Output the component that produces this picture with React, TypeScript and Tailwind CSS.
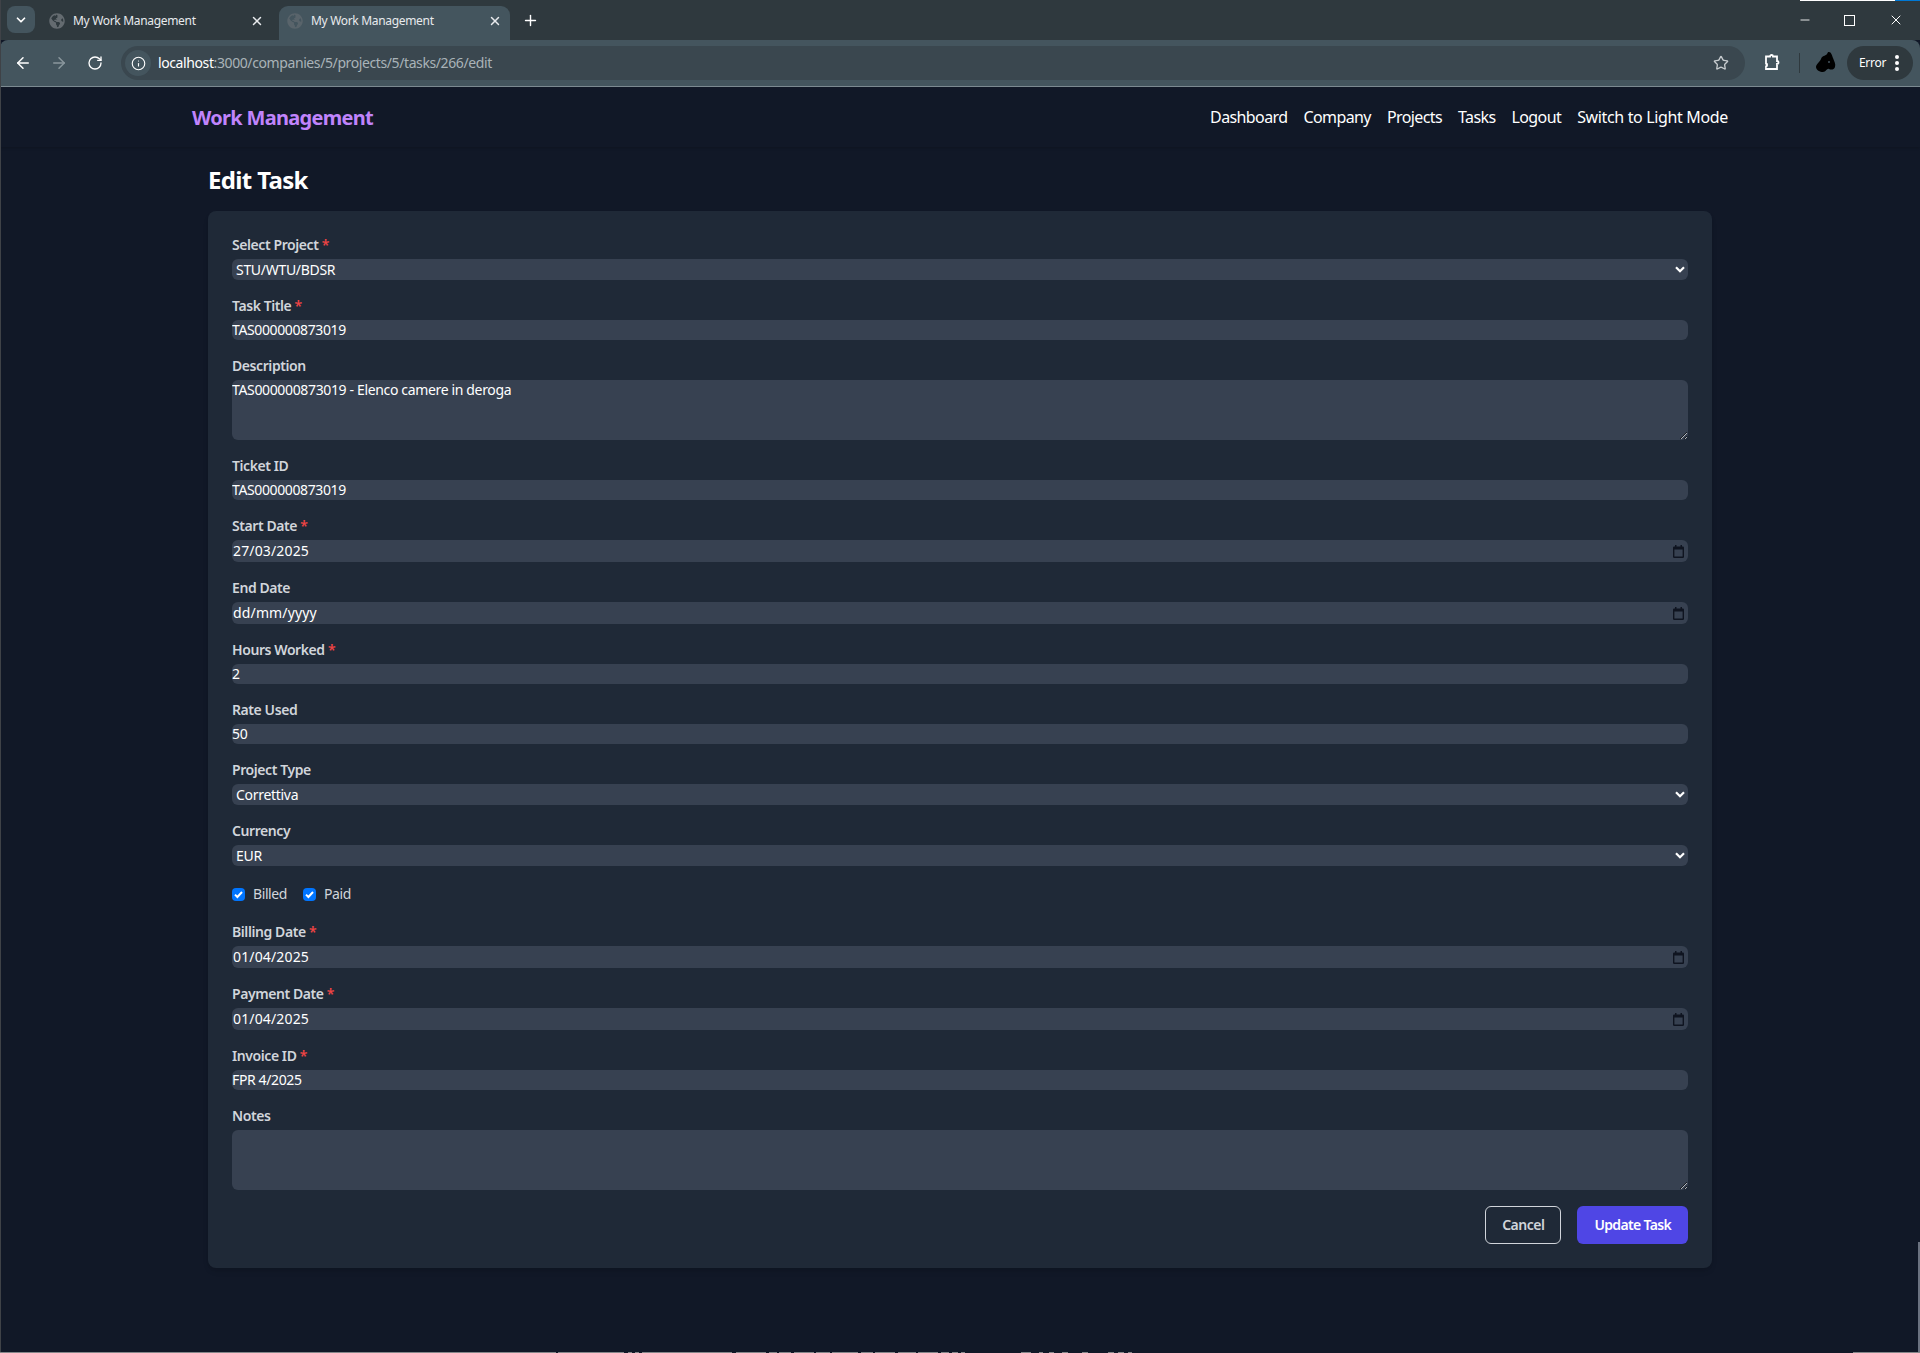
import { ArrowLeft, ArrowRight, ChevronDown, Info, Minus, Plus, RotateCw, Star, X } from 'lucide-react';
import { FaGlobeAmericas } from 'react-icons/fa';

const font = 'font-["Noto_Sans","Open_Sans",sans-serif]';
const labelClass = 'block text-sm leading-5 font-semibold text-[#d1d5db] tracking-[-0.42px]';
const inputClass = 'mt-1 block w-full bg-[#374151] rounded-md text-sm text-white outline-none';

// stray desktop pixels along the bottom edge of the capture: [gap before, width]
const bottomBits = [
  [0, 556], [2, 66], [4, 4], [3, 4], [3, 90], [4, 30], [3, 8], [2, 12], [3, 20], [2, 14], [2, 26], [3, 12], [2, 20], [3, 18], [2, 20], [3, 8], [3, 6], [3, 4],
  [56, 10], [8, 4], [6, 5], [8, 6], [14, 6], [20, 6], [4, 6], [4, 4],
];

const Label = ({ text, required }: { text: string; required?: boolean }) => (
  <label className={labelClass}>
    {text}
    {required && <span className="text-[#ef4444]"> *</span>}
  </label>
);

const TextField = ({ label, value, required }: { label: string; value: string; required?: boolean }) => (
  <div>
    <Label text={label} required={required} />
    <input readOnly value={value} className={`${inputClass} h-5 leading-5 tracking-[-0.38px]`} />
  </div>
);

const TextAreaField = ({ label, value }: { label: string; value: string }) => (
  <div>
    <Label text={label} />
    <textarea readOnly value={value} className={`${inputClass} h-[60px] leading-5 tracking-[-0.35px] [color-scheme:dark]`} />
  </div>
);

const SelectField = ({ label, value, required }: { label: string; value: string; required?: boolean }) => (
  <div>
    <Label text={label} required={required} />
    <div className={`${inputClass} h-[21px] leading-[21px] pl-1 pr-[3px] flex items-center justify-between tracking-[-0.3px]`}>
      <span>{value}</span>
      <svg width="10" height="7" viewBox="0 0 10 7">
        <path d="M1 1.200 5 5.200 9 1.200" fill="none" stroke="white" strokeWidth="2.200" />
      </svg>
    </div>
  </div>
);

const DateField = ({ label, value, required }: { label: string; value: string; required?: boolean }) => (
  <div>
    <Label text={label} required={required} />
    <div className={`${inputClass} h-[22px] leading-[22px] pl-px pr-1 flex items-center justify-between tracking-[0.15px]`}>
      <span>{value}</span>
      <svg width="11" height="13" viewBox="0 0 11 13" className="text-[#0f1420]">
        <path fill="currentColor" d="M2 0h1.500v1.500h4V0H9v1.500h.8A1.200 1.200 0 0 1 11 2.700v9.100a1.200 1.200 0 0 1-1.200 1.200H1.200A1.200 1.200 0 0 1 0 11.800V2.700a1.200 1.200 0 0 1 1.200-1.200H2V0Zm-.6 4.500v7.100h8.200V4.500H1.400Z" />
      </svg>
    </div>
  </div>
);

const Check = ({ label }: { label: string }) => (
  <label className="flex items-center gap-2 text-sm leading-6 text-[#d1d5db] tracking-[-0.4px]">
    <span className="w-[13px] h-[13px] rounded-sm bg-[#0075ff] flex items-center justify-center">
      <svg width="11" height="11" viewBox="0 0 11 11">
        <path d="M2 5.600 4.400 8 9 3" fill="none" stroke="white" strokeWidth="2" />
      </svg>
    </span>
    {label}
  </label>
);

const Tab = ({ active }: { active?: boolean }) => (
  <div className={`w-[231px] shrink-0 h-[34px] flex items-center pl-2 pr-2 pb-1 rounded-t-[9px] ${active ? 'bg-[#44555e]' : ''}`}>
    <FaGlobeAmericas size={16} className={`shrink-0 ${active ? 'text-[#59646b]' : 'text-[#646b70]'}`} />
    <span className="ml-2 text-xs text-[#e8eaed] flex-1 whitespace-nowrap tracking-[-0.32px]">My Work Management</span>
    <X size={14} strokeWidth={2.500} className="text-[#e8eaed]" />
  </div>
);

const Chrome = () => (
  <div className="shrink-0 relative">
    <div className="absolute top-0 right-0 h-px w-[120px] flex">
      <div className="w-[95px] bg-white" />
      <div className="flex-1 bg-[#0078d4]" />
    </div>
    <div className="h-10 bg-[#2f393e] flex items-start pl-[7px] pt-[6px]">
      <div className="w-7 h-[27px] rounded-lg bg-[#44555e] flex items-center justify-center mr-[6px]">
        <ChevronDown size={14} strokeWidth={3} className="text-white" />
      </div>
      <Tab />
      <div className="w-[7px]" />
      <Tab active />
      <Plus size={17} strokeWidth={2} className="text-white mt-[6px] ml-[12px]" />
      <div className="ml-auto flex items-center text-white -mt-[6px] h-10">
        <Minus size={14} strokeWidth={1.500} className="mr-[32px]" />
        <span className="w-[11px] h-[11px] border border-white mr-[33px]" />
        <X size={16} strokeWidth={1.500} className="mr-4" />
      </div>
    </div>
    <div className="h-[47px] bg-[#44555e] rounded-t-lg border-b border-[#7c8a91] flex items-center pl-[14px] pr-[7px] text-white">
      <ArrowLeft size={18} strokeWidth={2} />
      <ArrowRight size={18} strokeWidth={2} className="ml-[18px] text-[#8a979d]" />
      <RotateCw size={16} strokeWidth={2} className="ml-[19px]" />
      <div className="ml-[18px] w-[1624px] shrink-0 h-[34px] rounded-full bg-[#3a474f] flex items-center pl-1 pr-4">
        <span className="w-[26px] h-[26px] rounded-full bg-[#44555e] flex items-center justify-center">
          <Info size={15} strokeWidth={1.800} />
        </span>
        <span className="ml-[7px] text-sm tracking-[-0.4px] text-white">localhost<span className="text-[#a9b3b8]">:3000/companies/5/projects/5/tasks/266/edit</span></span>
        <Star size={16} strokeWidth={2} className="ml-auto text-[#c6cbce]" />
      </div>
      <svg width="18" height="18" viewBox="0 0 18 18" className="ml-[18px]">
        <path fill="none" stroke="white" strokeWidth="1.800" d="M3 2.500h4c0-2 3-2 3 0h4v4.500c2 0 2 3 0 3V15H3v-2.500c1.500 0 1.500-3 0-3V2.500Z" />
      </svg>
      <div className="w-px h-[20px] bg-[#2f393e] ml-[18px]" />
      <svg width="20" height="24" viewBox="0 0 20 24" className="ml-4">
        <path fill="#000" d="M13 1c2 0 3 3 4 6s3 6 2 9-4 3-6 2-3 3-6 3-7-2-7-5 4-5 5-8 3-3 5-4 1-3 3-3Z" />
        <circle cx="13" cy="11" r="1" fill="#44555e" />
      </svg>
      <div className="ml-auto w-[66px] h-[34px] rounded-full bg-[#2f393e] flex items-center pl-3 text-xs tracking-[-0.3px]">
        Error
        <span className="ml-[9px] flex flex-col gap-[2.500px]">
          <span className="w-[3.500px] h-[3.500px] rounded-full bg-white" />
          <span className="w-[3.500px] h-[3.500px] rounded-full bg-white" />
          <span className="w-[3.500px] h-[3.500px] rounded-full bg-white" />
        </span>
      </div>
    </div>
  </div>
);

export default function App() {
  return (
    <div className={`relative h-[1353px] overflow-hidden flex flex-col bg-[#111827] ${font}`}>
      <Chrome />
      <main className="flex-1 bg-[#111827]">
        <nav className="h-[60px] shadow-sm">
          <div className="max-w-[1536px] mx-auto h-full flex items-center justify-between">
            <span className="text-xl font-bold text-[#c084fc] tracking-[-0.7px] pt-px">Work Management</span>
            <div className="flex gap-4 text-white tracking-[-0.6px]">
              <a>Dashboard</a>
              <a>Company</a>
              <a>Projects</a>
              <a>Tasks</a>
              <a>Logout</a>
              <a className="tracking-[-0.35px]">Switch to Light Mode</a>
            </div>
          </div>
        </nav>
        <div className="max-w-[1536px] mx-auto px-4">
          <h1 className="text-2xl font-bold text-white mt-[17px] mb-[15px] leading-8 tracking-[-0.65px]">Edit Task</h1>
          <form className="bg-[#1f2937] rounded-lg p-6 flex flex-col gap-4 shadow-md">
            <SelectField label="Select Project" value="STU/WTU/BDSR" required />
            <TextField label="Task Title" value="TAS000000873019" required />
            <TextAreaField label="Description" value="TAS000000873019 - Elenco camere in deroga" />
            <TextField label="Ticket ID" value="TAS000000873019" />
            <DateField label="Start Date" value="27/03/2025" required />
            <DateField label="End Date" value="dd/mm/yyyy" />
            <TextField label="Hours Worked" value="2" required />
            <TextField label="Rate Used" value="50" />
            <SelectField label="Project Type" value="Correttiva" />
            <SelectField label="Currency" value="EUR" />
            <div className="flex gap-4">
              <Check label="Billed" />
              <Check label="Paid" />
            </div>
            <DateField label="Billing Date" value="01/04/2025" required />
            <DateField label="Payment Date" value="01/04/2025" required />
            <TextField label="Invoice ID" value="FPR 4/2025" required />
            <TextAreaField label="Notes" value="" />
            <div className="flex justify-end gap-4">
              <button type="button" className="px-4 py-2 h-[38px] rounded-md border border-[#d1d5db] text-sm font-semibold text-[#d1d5db] tracking-[-0.5px]">Cancel</button>
              <button type="button" className="px-4 py-2 h-[38px] rounded-md border border-transparent bg-[#4f46e5] text-sm font-semibold text-white tracking-[-0.66px]">Update Task</button>
            </div>
          </form>
        </div>
      </main>
      {/* capture edges: window border and what shows behind it */}
      <div className="absolute left-0 top-0 bottom-0 w-px bg-[#3f4247]" />
      <div className="absolute right-0 top-[1242px] bottom-0 w-[2px] bg-[#6b7280]" />
      <div className="absolute left-0 right-0 bottom-0 h-px flex">
        {bottomBits.map(([gap, width], i) => (
          <div key={i} className="bg-[#85878a]" style={{ marginLeft: gap, width }} />
        ))}
        <div className="ml-auto w-[67px] bg-[#85878a]" />
      </div>
    </div>
  );
}
